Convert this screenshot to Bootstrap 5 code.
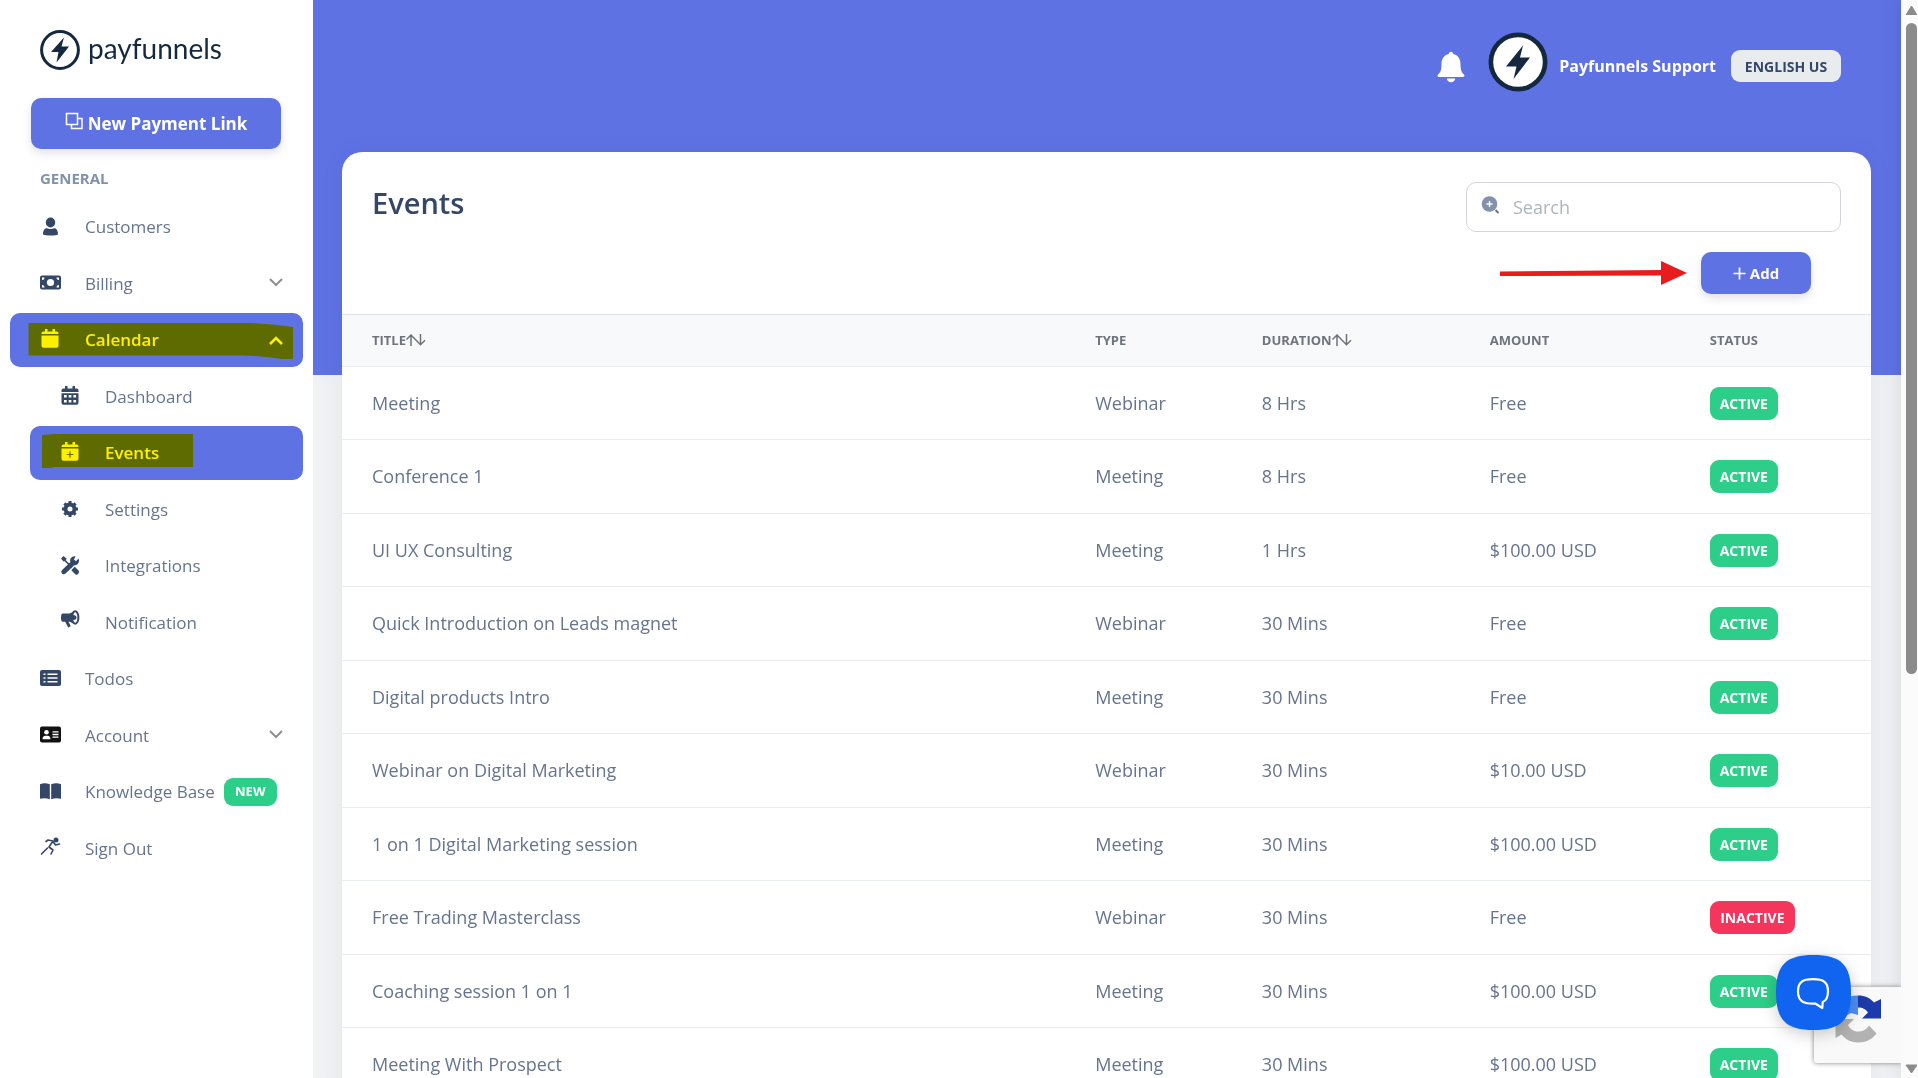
<!DOCTYPE html>
<html lang="en">
<head>
<meta charset="utf-8">
<meta name="viewport" content="width=device-width, initial-scale=1">
<title>Payfunnels - Events</title>
<link href="https://cdn.jsdelivr.net/npm/bootstrap@5.3.0/dist/css/bootstrap.min.css" rel="stylesheet">
<style>
  :root { --pf-primary: #5e72e4; --pf-navy: #344767; --pf-text: #67748e; --pf-green: #2dce89; --pf-red: #f5365c; }
  body { font-family: "Open Sans", "Noto Sans", sans-serif; font-size: 17px; color: var(--pf-text); background: #eff1f4; overflow: hidden; }
  a { text-decoration: none; color: inherit; }
  .app-shell { height: 100vh; }

  /* sidebar */
  .side-panel { width: 313px; background: #fff; }
  .brand-link { padding: 30px 0 0 40px; gap: 8px; color: #14293f; }
  .brand-text { font-family: Lato, sans-serif; font-size: 28px; line-height: 36px; padding-bottom: 4px; }
  .new-link { margin: 28px 32px 0 31px; height: 51px; font-size: 17px; }
  .new-link svg { margin-bottom: 4px; }
  .btn-pf { background: var(--pf-primary); color: #fff; border: 0; border-radius: 10px; font-weight: 700; box-shadow: 0 4px 8px rgba(50,50,93,.14); }
  .btn-pf:hover { background: #4f63d8; color: #fff; }
  .menu-title { margin: 19px 0 0 40px; font-size: 15px; line-height: 20px; font-weight: 700; color: #8392ab; }
  .menu-list { margin: 12px 10px 0; padding: 0; list-style: none; }
  .menu-list li { margin-bottom: 2px; }
  .menu-list li:nth-child(odd) { margin-bottom: 3px; }
  .menu-list .sub { padding-left: 20px; }
  .menu-item { height: 54px; padding: 0 17px 0 28px; border-radius: 10px; position: relative; }
  .menu-item .ico { width: 24px; height: 24px; margin-bottom: 4px; color: var(--pf-navy); flex: none; }
  .menu-item .txt { margin-left: 23px; }
  .menu-item.on { background: var(--pf-primary); color: #fff; font-weight: 600; }
  .menu-item.on .ico { color: #fff; }
  .menu-item .chev { width: 20px; height: 20px; margin-bottom: 2px; color: #8f8f8f; }
  .menu-item.on .chev { color: #fff; }
  .marker { position: absolute; left: 0; top: 0; width: 100%; height: 100%; mix-blend-mode: multiply; pointer-events: none; }
  .pill { border-radius: 9px; color: #fff; font-weight: 700; display: inline-flex; align-items: center; justify-content: center; }
  .pill-new { background: var(--pf-green); font-size: 13px; width: 53px; height: 28px; margin-left: 9px; }

  /* content */
  .content-area { background: linear-gradient(var(--pf-primary) 375px, transparent 375px); }
  .top-row { height: 152px; padding: 32px 60px 0 0; }
  .top-row .bell { width: 28px; height: 32px; margin: 19px 23px 0 0; }
  .user-name { color: #fff; font-size: 16px; font-weight: 700; line-height: 26px; margin: 21px 0 0 11px; }
  .lang-btn { background: #e9ecef; color: var(--pf-navy); border: 0; border-radius: 9px; font-size: 14px; font-weight: 700; height: 32px; width: 110px; padding: 0; margin: 18px 0 0 15px; }
  .events-card { margin: 0 30px 0 29px; border: 0; border-radius: 20px; background: #fff; box-shadow: 0 0 24px rgba(0,0,0,.05); }
  .card-top { padding: 30px 30px 0; }
  .card-top h1 { font-size: 29px; line-height: 42px; font-weight: 600; color: var(--pf-navy); margin: 0; }
  .search-wrap { width: 375px; }
  .search-wrap svg { position: absolute; left: 15px; top: 13px; }
  .search-wrap input { height: 50px; border-radius: 10px; border: 1px solid #d2d6da; padding: 0 16px 1px 46px; font-size: 18px; color: var(--pf-text); }
  .search-wrap input::placeholder { color: #adb5bd; }
  .add-row { padding: 20px 60px 20px 0; gap: 14px; }
  .add-btn { width: 110px; height: 42px; font-size: 15px; padding: 0; }

  .events-table { width: 100%; table-layout: fixed; border-collapse: collapse; font-size: 18px; }
  .events-table th { height: 52px; padding: 0 0 0 30px; font-size: 13px; font-weight: 700; color: #6f747b; background: #f8f9fb; border-top: 1px solid #dee2e6; border-bottom: 1px solid #e9ecef; }
  .events-table th svg { margin-bottom: 2px; }
  .events-table td { height: 73px; padding: 0 0 0 30px; border-bottom: 1px solid #e9ecef; vertical-align: middle; }
  .events-table tr:nth-child(even) td { height: 74px; }
  .pill-state { font-size: 14px; height: 33px; width: 68px; background: var(--pf-green); vertical-align: middle; }
  .pill-state.off { background: var(--pf-red); width: 85px; }

  /* page scroll track */
  .scroll-track { width: 17px; background: #fbfbfb; box-shadow: 0 0 20px rgba(0,0,0,.12); z-index: 2; }
  .scroll-track .thumb { width: 11px; height: 60.4vh; border-radius: 6px; background: #8b8b8b; }

  /* floating widgets */
  .captcha-box { position: absolute; right: 17px; bottom: 15px; width: 87px; height: 76px; background: #f9f9f9; border-radius: 3px 0 0 3px; box-shadow: 0 0 5px #808080; clip-path: inset(-8px 0 -8px -8px); z-index: 3; }
  .chat-btn { position: absolute; right: 67px; bottom: 48px; width: 75px; height: 75px; border: 0; padding: 0; background: none; z-index: 4; filter: drop-shadow(0 4px 8px rgba(0,0,0,.2)); }
  .chat-btn svg { display: block; }
</style>
</head>
<body>
<div class="app-shell d-flex position-relative overflow-hidden">

  <aside class="side-panel flex-shrink-0 d-flex flex-column">
    <a href="#" class="brand-link d-flex align-items-center">
      <svg width="40" height="40" viewBox="0 0 40 40"><circle cx="20" cy="20" r="18.4" fill="none" stroke="#14293f" stroke-width="3"/><path d="M24 7.500 11 22h7.500l-2 10.500L29 16.500h-7.500z" fill="#14293f"/></svg>
      <span class="brand-text">payfunnels</span>
    </a>
    <button type="button" class="btn btn-pf new-link d-flex align-items-center justify-content-center gap-1 p-0">
      <svg width="19" height="19" viewBox="0 0 19 19" fill="none" stroke="#fff" stroke-width="1.500"><path d="M1.500 1.500h11v11h-11zM12.500 6.500h4.500v10H6.500v-4"/></svg>
      <span>New Payment Link</span>
    </button>
    <div class="menu-title">GENERAL</div>

    <ul class="menu-list">
      <li><a href="#" class="menu-item d-flex align-items-center">
        <svg class="ico" viewBox="0 0 24 24" fill="currentColor"><ellipse cx="12.500" cy="9.500" rx="4.700" ry="5"/><path d="M5 21c0-4 2-5.800 4-5.800 1.500 1 5.500 1 7 0 2 0 4 1.800 4 5.800 0 1-3 1.500-7.500 1.500S5 22 5 21z"/></svg>
        <span class="txt">Customers</span></a></li>
      <li><a href="#" class="menu-item d-flex align-items-center">
        <svg class="ico" viewBox="0 0 24 24"><rect x="2" y="5.500" width="21" height="14" rx="2" fill="currentColor"/><circle cx="12.500" cy="12.500" r="3.600" fill="#fff"/><path d="M4 10V7.500h2.500A2.500 2.500 0 0 1 4 10zM21 10V7.500h-2.500A2.500 2.500 0 0 0 21 10zM4 15v2.500h2.500A2.500 2.500 0 0 0 4 15zM21 15v2.500h-2.500A2.500 2.500 0 0 1 21 15z" fill="#fff"/></svg>
        <span class="txt">Billing</span>
        <svg class="chev ms-auto" viewBox="0 0 20 20" fill="none" stroke="currentColor" stroke-width="2"><path d="m4 6 6 6 6-6"/></svg></a></li>
      <li><a href="#" class="menu-item on d-flex align-items-center">
        <svg class="ico" viewBox="0 0 24 24" fill="currentColor"><path d="M7 3h2.500v2.500h5V3H17v2.500h1.500a2 2 0 0 1 2 2V8h-17v-.5a2 2 0 0 1 2-2H7zM3.500 9.500h17v10.300a2 2 0 0 1-2 2h-13a2 2 0 0 1-2-2z"/></svg>
        <span class="txt">Calendar</span>
        <svg class="chev ms-auto" viewBox="0 0 20 20" fill="none" stroke="currentColor" stroke-width="2.600"><path d="m4 15 6-6 6 6"/></svg>
        <svg class="marker" viewBox="0 0 293 54" preserveAspectRatio="none"><path d="M18.500 10H240q20 .5 43 4v32h-12q-15-3-38-3.500H18.500z" fill="#fff000"/></svg></a></li>
      <li class="sub"><a href="#" class="menu-item d-flex align-items-center">
        <svg class="ico" viewBox="0 0 24 24" fill="currentColor"><path d="M7 3h2.500v2.500h5V3H17v2.500h1.500a2 2 0 0 1 2 2V9h-17V7.500a2 2 0 0 1 2-2H7z"/><path fill-rule="evenodd" d="M3.500 10.300h17v9.500a2 2 0 0 1-2 2h-13a2 2 0 0 1-2-2zM6 12v2.500h2.700V12zm4.700 0v2.500h2.700V12zm4.700 0v2.500h2.700V12zM6 17v2.500h2.700V17zm4.700 0v2.500h2.700V17zm4.700 0v2.500h2.700V17z"/></svg>
        <span class="txt">Dashboard</span></a></li>
      <li class="sub"><a href="#" class="menu-item on d-flex align-items-center">
        <svg class="ico" viewBox="0 0 24 24" fill="currentColor"><path d="M7 3h2.500v2.500h5V3H17v2.500h1.500a2 2 0 0 1 2 2V8h-17v-.5a2 2 0 0 1 2-2H7zM3.500 9.500h17v10.300a2 2 0 0 1-2 2h-13a2 2 0 0 1-2-2z"/><path d="M12 12.200v6.600M8.700 15.500h6.600" stroke="#5e72e4" stroke-width="1.200"/></svg>
        <span class="txt">Events</span>
        <svg class="marker" viewBox="0 0 273 54" preserveAspectRatio="none"><path d="M12 9l12-1h139v33H24l-2 1H12z" fill="#fff000"/></svg></a></li>
      <li class="sub"><a href="#" class="menu-item d-flex align-items-center">
        <svg class="ico" viewBox="0 0 24 24" fill="none" stroke="currentColor"><circle cx="12" cy="13" r="4.500" stroke-width="4"/><path d="M12 5v3M12 18v3M4 13h3M17 13h3M6.400 7.400l2 2M15.600 16.600l2 2M17.600 7.400l-2 2M8.400 16.600l-2 2" stroke-width="3"/></svg>
        <span class="txt">Settings</span></a></li>
      <li class="sub"><a href="#" class="menu-item d-flex align-items-center">
        <svg class="ico" viewBox="0 0 24 24" fill="none" stroke="currentColor" stroke-linecap="round"><g transform="translate(0 1)"><path d="M5.800 18.700 15 10" stroke-width="5"/><path d="M20.500 5.500a4.500 4.500 0 1 1-3-2.200L16 6.500l2 1.700z" fill="currentColor" stroke="none"/><path d="m15.500 16 3 3" stroke-width="5"/><path d="m5.500 6 6.500 6.500" stroke-width="1.700"/><path d="M3 5.500 5.500 3 8.500 5.500 7.800 7.500 5.500 8.500z" fill="currentColor" stroke="none"/><path d="m12.200 17.500 3.800-4" stroke="#fff" stroke-width="1.200"/></g></svg>
        <span class="txt">Integrations</span></a></li>
      <li class="sub"><a href="#" class="menu-item d-flex align-items-center">
        <svg class="ico" viewBox="0 0 24 24" fill="currentColor"><path d="M4.500 4.500H10c2 0 3.500-.6 5-2v12c-1.500-1.300-3-1.800-4.500-1.800l2.300 4.600-2.600 1.100-3-5.700H4.500C3.500 12.500 3 11 3 8.700s.5-4.200 1.500-4.200z"/><ellipse cx="17.200" cy="8.500" rx="3.200" ry="6.200" fill="#fff" stroke="currentColor" stroke-width="2"/><path d="M15 6q3.500 0 3.500 2.500T15 11z"/></svg>
        <span class="txt">Notification</span></a></li>
      <li><a href="#" class="menu-item d-flex align-items-center">
        <svg class="ico" viewBox="0 0 24 24"><rect x="2" y="5" width="21" height="16" rx="2" fill="currentColor"/><path d="M5.500 9.200h2M9.500 9.200h10M5.500 13h2M9.500 13h10M5.500 16.800h2M9.500 16.800h10" stroke="#fff" stroke-width="1.600"/></svg>
        <span class="txt">Todos</span></a></li>
      <li><a href="#" class="menu-item d-flex align-items-center">
        <svg class="ico" viewBox="0 0 24 24"><rect x="2" y="4.500" width="21" height="16" rx="2" fill="#111"/><circle cx="8.500" cy="10.200" r="2.300" fill="#fff"/><path d="M4.500 17.300q0-3.500 3-3.500h2q3 0 3 3.500z" fill="#fff"/><path d="M14.500 9.800h6M14.500 12.500h6M14.500 15.200h6" stroke="#fff" stroke-width="1.300"/></svg>
        <span class="txt">Account</span>
        <svg class="chev ms-auto" viewBox="0 0 20 20" fill="none" stroke="currentColor" stroke-width="2"><path d="m4 6 6 6 6-6"/></svg></a></li>
      <li><a href="#" class="menu-item d-flex align-items-center">
        <svg class="ico" viewBox="0 0 24 24" fill="currentColor"><path d="M2 6.300q4.500-2 9.800 0v15Q7 19.300 2 20.800zM23 6.300q-4.500-2-9.800 0v15q4.800-2 9.800-.5z"/></svg>
        <span class="txt">Knowledge Base</span>
        <span class="pill pill-new">NEW</span></a></li>
      <li><a href="#" class="menu-item d-flex align-items-center">
        <svg class="ico" viewBox="0 0 24 24" fill="none" stroke="currentColor" stroke-width="1.600" stroke-linecap="round" stroke-linejoin="round"><circle cx="18" cy="5" r="2.500" fill="currentColor" stroke="none"/><path d="M8 6.500 10 5l5 1-4 6 4 3-2 4M15 6.500l2.500 3.500 4-1M9.500 13 7 15.500 3.500 19"/></svg>
        <span class="txt">Sign Out</span></a></li>
    </ul>
  </aside>

  <main class="content-area flex-grow-1">
    <header class="top-row d-flex justify-content-end align-items-start">
      <svg class="bell" viewBox="0 0 28 32" fill="#fff"><path d="M14 .8c1.500 0 2.200 1 2.200 2.200 4.800 1 7.300 5 7.300 10 0 6 1 8.500 3.500 10.500 1 1.500.3 2.500-1 2.500H2c-1.300 0-2-1-1-2.500C3.500 21.500 4.500 19 4.500 13c0-5 2.500-9 7.300-10C11.800 1.800 12.500.8 14 .8zM9.800 27.500h8.400c-.4 2.500-2 3.700-4.200 3.700s-3.800-1.200-4.200-3.700z"/></svg>
      <svg width="60" height="60" viewBox="0 0 60 60"><circle cx="30" cy="30" r="29.500" fill="#14293f"/><circle cx="30" cy="30" r="24.800" fill="#fff"/><path d="M35 13.500 18 34.500h10.500L25.500 47 42 25.500H32z" fill="#14293f"/></svg>
      <a href="#" class="user-name">Payfunnels Support</a>
      <button type="button" class="btn lang-btn">ENGLISH US</button>
    </header>

    <section class="events-card">
      <div class="card-top d-flex justify-content-between align-items-start">
        <h1>Events</h1>
        <div class="search-wrap position-relative">
          <svg width="20" height="20" viewBox="0 0 20 20"><circle cx="8.500" cy="9" r="7.800" fill="#8392ab"/><path d="M8.500 6v6M5.500 9h6" stroke="#fff" stroke-width="1.300"/><path d="m14.500 15 3 3" stroke="#67748e" stroke-width="2"/></svg>
          <input type="search" class="form-control" placeholder="Search" aria-label="Search">
        </div>
      </div>
      <div class="add-row d-flex justify-content-end align-items-center">
        <svg width="187" height="26" viewBox="0 0 187 26" fill="#e81c1c"><path d="M0 11.500 161 10V1l26 12-26 12v-9.500L0 16z"/></svg>
        <button type="button" class="btn btn-pf add-btn d-flex align-items-center justify-content-center gap-1">
          <svg width="13" height="13" viewBox="0 0 13 13" stroke="#fff" stroke-width="1.700"><path d="M6.500.5v12M.5 6.500h12"/></svg><span>Add</span></button>
      </div>
      <table class="events-table">
        <colgroup><col style="width:47.3%"><col style="width:10.9%"><col style="width:14.900%"><col style="width:14.400%"><col></colgroup>
        <thead><tr>
          <th scope="col">TITLE<svg width="20" height="12" viewBox="0 0 20 12" fill="none" stroke="#6f747b" stroke-width="1.500"><path d="M5 12V1M.5 5.500 5 1l9.500 9.800 4.500-4.500M14.500 0v11"/></svg></th>
          <th scope="col">TYPE</th>
          <th scope="col">DURATION<svg width="20" height="12" viewBox="0 0 20 12" fill="none" stroke="#6f747b" stroke-width="1.500"><path d="M5 12V1M.5 5.500 5 1l9.500 9.800 4.500-4.500M14.500 0v11"/></svg></th>
          <th scope="col">AMOUNT</th>
          <th scope="col">STATUS</th>
        </tr></thead>
        <tbody>
          <tr><td>Meeting</td><td>Webinar</td><td>8 Hrs</td><td>Free</td><td><span class="pill pill-state">ACTIVE</span></td></tr>
          <tr><td>Conference 1</td><td>Meeting</td><td>8 Hrs</td><td>Free</td><td><span class="pill pill-state">ACTIVE</span></td></tr>
          <tr><td>UI UX Consulting</td><td>Meeting</td><td>1 Hrs</td><td>$100.00 USD</td><td><span class="pill pill-state">ACTIVE</span></td></tr>
          <tr><td>Quick Introduction on Leads magnet</td><td>Webinar</td><td>30 Mins</td><td>Free</td><td><span class="pill pill-state">ACTIVE</span></td></tr>
          <tr><td>Digital products Intro</td><td>Meeting</td><td>30 Mins</td><td>Free</td><td><span class="pill pill-state">ACTIVE</span></td></tr>
          <tr><td>Webinar on Digital Marketing</td><td>Webinar</td><td>30 Mins</td><td>$10.00 USD</td><td><span class="pill pill-state">ACTIVE</span></td></tr>
          <tr><td>1 on 1 Digital Marketing session</td><td>Meeting</td><td>30 Mins</td><td>$100.00 USD</td><td><span class="pill pill-state">ACTIVE</span></td></tr>
          <tr><td>Free Trading Masterclass</td><td>Webinar</td><td>30 Mins</td><td>Free</td><td><span class="pill pill-state off">INACTIVE</span></td></tr>
          <tr><td>Coaching session 1 on 1</td><td>Meeting</td><td>30 Mins</td><td>$100.00 USD</td><td><span class="pill pill-state">ACTIVE</span></td></tr>
          <tr><td>Meeting With Prospect</td><td>Meeting</td><td>30 Mins</td><td>$100.00 USD</td><td><span class="pill pill-state">ACTIVE</span></td></tr>
        </tbody>
      </table>
    </section>
  </main>

  <div class="scroll-track flex-shrink-0 d-flex flex-column align-items-center justify-content-between ps-1" aria-hidden="true">
    <div class="d-flex flex-column align-items-center">
      <svg class="mt-1 mb-2" width="13" height="11" viewBox="0 0 13 11" fill="#8b8b8b"><path d="M6.500 2 12 11H1z" stroke="#8b8b8b" stroke-linejoin="round"/></svg>
      <div class="thumb"></div>
    </div>
    <svg class="mb-1" width="13" height="10" viewBox="0 0 13 10"><path d="M1 1h11L6.500 9z" fill="#8b8b8b" stroke="#8b8b8b" stroke-linejoin="round"/></svg>
  </div>

  <div class="captcha-box">
    <svg width="87" height="76" viewBox="0 0 87 76">
      <path d="M44 8.500c7 0 12 2.500 16 7l7-3.500v19.500H48l6-6c-2-3-5-5-10-5z" fill="#1c3aa9"/>
      <path d="M44 8.500c-11 0-20 6-22.500 16L28 31l9-5 7 2z" fill="#4a90f5"/>
      <path d="M21.500 32H40l-6 6c2 4 5.500 6.500 10 6.500 5 0 8.500-2 11-6l7.500 8C58 52.500 52 55.500 44 55.500c-7 0-12.500-3-16.500-8l-6 3.500z" fill="#b2b2b2"/>
    </svg>
  </div>
  <button type="button" class="chat-btn" aria-label="Open chat">
    <svg width="75" height="75" viewBox="0 0 75 75"><path d="M37.500 0C65 0 75 10 75 37.500S65 75 37.500 75 0 65 0 37.500 10 0 37.500 0z" fill="#1164f0"/><path d="M37 24.200c10.500 0 15 3 15 12 0 6-1.700 9.300-5.300 10.800l-.4 6-7-4.500c-13 .8-17.300-3.300-17.300-12.300 0-9 4.500-12 15-12z" fill="none" stroke="#fff" stroke-width="2.200" stroke-linejoin="round"/></svg>
  </button>
</div>
<script src="https://cdn.jsdelivr.net/npm/bootstrap@5.3.0/dist/js/bootstrap.bundle.min.js"></script>
</body>
</html>
